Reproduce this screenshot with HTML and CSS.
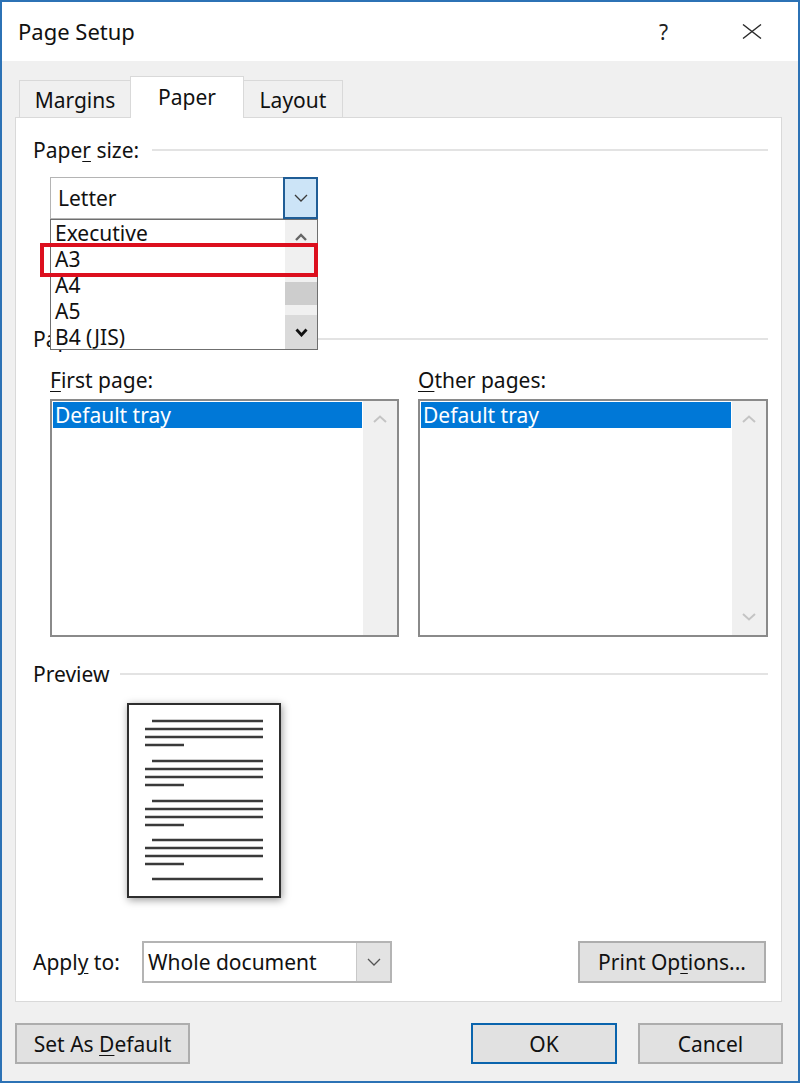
FILE: index.html
```html
<!DOCTYPE html>
<html lang="en">
<head>
  <meta charset="UTF-8" />
  <title>Page Setup</title>
  <link rel="stylesheet" href="styles.css">
</head>
<body>
  <div class="dialog">
    <div class="titlebar">
      <span class="title">Page Setup</span>
      <span class="help">?</span>
      <svg class="close" width="20" height="15" viewBox="0 0 20 15">
        <path d="M1 0.5 L19 14.5 M19 0.5 L1 14.5" stroke="#2b2b2b" stroke-width="1.4" fill="none"/>
      </svg>
    </div>

    <div class="body">
      <div class="tabs">
        <div class="tab tab-margins">Margins</div>
        <div class="tab tab-paper active">Paper</div>
        <div class="tab tab-layout">Layout</div>
      </div>

      <div class="panel">
        <div class="section-head">
          <span>Pape<u>r</u> size:</span>
          <span class="rule"></span>
        </div>
        <div class="size-row">
          <div class="combo combo-letter">
            <span class="combo-text">Letter</span>
            <span class="combo-btn open">
              <svg width="14" height="8" viewBox="0 0 14 8"><polyline points="1,1 7,7 13,1" fill="none" stroke="#3a3a3a" stroke-width="1.3"/></svg>
            </span>
            <!-- open drop-down list, lies over the paper source label -->
            <div class="dropdown">
              <div class="dd-items">
                <div class="dd-item">Executive</div>
                <div class="dd-item">A3</div>
                <div class="dd-item">A4</div>
                <div class="dd-item">A5</div>
                <div class="dd-item">B4 (JIS)</div>
              </div>
              <div class="dd-scroll">
                <div class="dd-up">
                  <svg width="12" height="8" viewBox="0 0 12 8"><polyline points="1,7 6,2 11,7" fill="none" stroke="#666" stroke-width="2.4"/></svg>
                </div>
                <div class="dd-track"></div>
                <div class="dd-thumb"></div>
                <div class="dd-track small"></div>
                <div class="dd-down">
                  <svg width="13" height="9" viewBox="0 0 13 9"><polyline points="1.5,1.5 6.5,7 11.5,1.5" fill="none" stroke="#111" stroke-width="2.8"/></svg>
                </div>
              </div>
              <div class="highlight"></div>
            </div>
          </div>
        </div>

        <div class="section-head source-head">
          <span>Paper source</span>
          <span class="rule"></span>
        </div>
        <div class="trays">
          <div class="tray">
            <div class="tray-label"><u>F</u>irst page:</div>
            <div class="listbox">
              <div class="list-items">
                <div class="list-item selected">Default tray</div>
              </div>
              <div class="list-scroll">
                <div class="ls-btn">
                  <svg width="14" height="8" viewBox="0 0 14 8"><polyline points="1,7 7,1.5 13,7" fill="none" stroke="#c4c4c4" stroke-width="2"/></svg>
                </div>
              </div>
            </div>
          </div>
          <div class="tray">
            <div class="tray-label"><u>O</u>ther pages:</div>
            <div class="listbox">
              <div class="list-items">
                <div class="list-item selected">Default tray</div>
              </div>
              <div class="list-scroll">
                <div class="ls-btn">
                  <svg width="14" height="8" viewBox="0 0 14 8"><polyline points="1,7 7,1.5 13,7" fill="none" stroke="#c4c4c4" stroke-width="2"/></svg>
                </div>
                <div class="ls-btn bottom">
                  <svg width="14" height="8" viewBox="0 0 14 8"><polyline points="1,1 7,6.5 13,1" fill="none" stroke="#c4c4c4" stroke-width="2"/></svg>
                </div>
              </div>
            </div>
          </div>
        </div>

        <div class="section-head preview-head">
          <span>Preview</span>
          <span class="rule"></span>
        </div>
        <div class="preview-page">
          <svg width="150" height="191" viewBox="0 0 150 191">
            <g stroke="#3a3a3a" stroke-width="2.3">
              <line x1="23" y1="16" x2="134" y2="16"/>
              <line x1="16" y1="24" x2="134" y2="24"/>
              <line x1="16" y1="32" x2="134" y2="32"/>
              <line x1="16" y1="40" x2="55" y2="40"/>
              <line x1="23" y1="56" x2="134" y2="56"/>
              <line x1="16" y1="64" x2="134" y2="64"/>
              <line x1="16" y1="72" x2="134" y2="72"/>
              <line x1="16" y1="80" x2="55" y2="80"/>
              <line x1="23" y1="96" x2="134" y2="96"/>
              <line x1="16" y1="104" x2="134" y2="104"/>
              <line x1="16" y1="112" x2="134" y2="112"/>
              <line x1="16" y1="120" x2="55" y2="120"/>
              <line x1="23" y1="135" x2="134" y2="135"/>
              <line x1="16" y1="143" x2="134" y2="143"/>
              <line x1="16" y1="151" x2="134" y2="151"/>
              <line x1="16" y1="159" x2="55" y2="159"/>
              <line x1="23" y1="174" x2="134" y2="174"/>
            </g>
          </svg>
        </div>

        <div class="apply-row">
          <span class="apply-label">Appl<u>y</u> to:</span>
          <div class="combo combo-apply">
            <span class="combo-text">Whole document</span>
            <span class="combo-btn">
              <svg width="14" height="8" viewBox="0 0 14 8"><polyline points="1,1 7,7 13,1" fill="none" stroke="#555" stroke-width="1.3"/></svg>
            </span>
          </div>
          <button class="btn print-btn">Print Op<u>t</u>ions...</button>
        </div>
      </div>

      <div class="footer">
        <button class="btn default-btn">Set As <u>D</u>efault</button>
        <button class="btn ok-btn">OK</button>
        <button class="btn cancel-btn">Cancel</button>
      </div>
    </div>
  </div>
</body>
</html>
```

FILE: styles.css
```css
body {
  margin: 0;
  padding: 0;
  font-family: "Noto Sans", "Open Sans", sans-serif;
  font-size: 21px;
  color: #111;
  background: #f0f0f0;
}
u {
  text-decoration: underline;
  text-underline-offset: 3px;
  text-decoration-thickness: 1px;
}
.dialog {
  width: 800px;
  height: 1083px;
  box-sizing: border-box;
  border: 2px solid #2c72b5;
  background: #f0f0f0;
  overflow: hidden;
}
.titlebar {
  height: 59px;
  background: #fff;
  display: flex;
  align-items: center;
  padding-left: 16px;
  padding-right: 36px;
}
.title {
  font-size: 22px;
  line-height: 26px;
  color: #111;
  margin-top: -2px;
}
.help {
  margin-left: auto;
  margin-right: 74px;
  font-size: 21px;
  line-height: 26px;
  color: #222;
}
.close {
  display: block;
}
.body {
  padding-left: 13px;
}
.tabs {
  height: 56px;
  display: flex;
  align-items: flex-end;
  padding-left: 4px;
  position: relative;
  z-index: 1;
}
.tab {
  height: 37px;
  box-sizing: border-box;
  border: 1px solid #d9d9d9;
  border-bottom: none;
  background: #f0f0f0;
  text-align: center;
  padding-top: 6px;
  line-height: 26px;
}
.tab-margins {
  width: 112px;
}
.tab-paper {
  width: 114px;
  margin-left: -1px;
}
.tab-layout {
  width: 100px;
  margin-left: -1px;
}
.tab.active {
  height: 42px;
  background: #fff;
  margin-bottom: -1px;
  padding-top: 7px;
  position: relative;
  z-index: 2;
}
.panel {
  width: 767px;
  height: 885px;
  box-sizing: border-box;
  border: 1px solid #d9d9d9;
  background: #fff;
  padding: 19px 13px 0 17px;
}
.section-head {
  display: flex;
  align-items: center;
  height: 26px;
  line-height: 26px;
}
.rule {
  flex: 1;
  height: 2px;
  background: #e3e3e3;
  margin-left: 13px;
}
.preview-head .rule {
  margin-left: 11px;
}
.size-row {
  margin-top: 14px;
  padding-left: 17px;
}
.combo {
  display: flex;
  box-sizing: border-box;
  background: #fff;
  position: relative;
}
.combo-text {
  flex: 1;
  line-height: 26px;
  align-self: center;
}
.combo-btn {
  width: 34px;
  display: flex;
  align-items: center;
  justify-content: center;
  box-sizing: border-box;
}
.combo-letter {
  width: 268px;
  height: 42px;
  border: 1px solid #b4b4b4;
}
.combo-letter .combo-text {
  padding-left: 7px;
}
.combo-btn.open {
  width: 35px;
  margin: -1px -1px -1px 0;
  background: #cce4f7;
  border: 2px solid #1f5d96;
}
.dropdown {
  position: absolute;
  left: -1px;
  top: 41px;
  width: 268px;
  height: 131px;
  box-sizing: border-box;
  border: 1px solid #6f6f6f;
  background: #fff;
  display: flex;
  z-index: 5;
}
.dd-items {
  flex: 1;
  overflow: hidden;
  padding-left: 4px;
}
.dd-item {
  height: 26px;
  line-height: 26px;
}
.dd-scroll {
  width: 32px;
  background: #f0f0f0;
  display: flex;
  flex-direction: column;
}
.dd-up {
  height: 33px;
  display: flex;
  align-items: center;
  justify-content: center;
}
.dd-track {
  height: 29px;
}
.dd-track.small {
  height: 10px;
}
.dd-thumb {
  height: 23px;
  background: #cdcdcd;
}
.dd-down {
  flex: 1;
  background: #dadada;
  display: flex;
  align-items: center;
  justify-content: center;
}
.highlight {
  position: absolute;
  left: -11px;
  top: 23px;
  width: 278px;
  height: 34px;
  box-sizing: border-box;
  border: 4px solid #dc0f1e;
}
.source-head {
  margin-top: 107px;
}
.trays {
  margin-top: 15px;
  padding-left: 17px;
  display: grid;
  grid-template-columns: 349px 350px;
  column-gap: 19px;
}
.tray-label {
  line-height: 26px;
}
.listbox {
  margin-top: 6px;
  height: 238px;
  box-sizing: border-box;
  border: 2px solid #8a8a8a;
  display: flex;
  background: #fff;
}
.list-items {
  flex: 1;
  padding: 1px;
}
.list-item {
  height: 26px;
  line-height: 26px;
  padding-left: 2px;
}
.list-item.selected {
  background: #0078d7;
  color: #fff;
}
.list-scroll {
  width: 34px;
  background: #f0f0f0;
  display: flex;
  flex-direction: column;
  justify-content: space-between;
}
.ls-btn {
  height: 36px;
  display: flex;
  align-items: center;
  justify-content: center;
}
.preview-head {
  margin-top: 24px;
}
.preview-page {
  margin-top: 16px;
  margin-left: 94px;
  width: 154px;
  height: 195px;
  box-sizing: border-box;
  border: 2px solid #2e2e2e;
  background: #fff;
  box-shadow: 1px 2px 8px rgba(0, 0, 0, 0.4);
}
.preview-page svg {
  display: block;
}
.apply-row {
  margin-top: 43px;
  height: 42px;
  display: flex;
  align-items: center;
}
.apply-label {
  width: 109px;
  line-height: 26px;
}
.combo-apply {
  width: 250px;
  height: 42px;
  border: 2px solid #b4b4b4;
}
.combo-apply .combo-text {
  padding-left: 4px;
}
.combo-apply .combo-btn {
  background: #e3e3e3;
  border-left: 1px solid #c8c8c8;
}
.btn {
  font-family: "Noto Sans", "Open Sans", sans-serif;
  font-size: 21px;
  line-height: 26px;
  color: #111;
  background: #e1e1e1;
  border: 2px solid #adadad;
  padding: 0;
  box-sizing: border-box;
}
.print-btn {
  margin-left: auto;
  margin-right: 2px;
  width: 188px;
  height: 42px;
}
.footer {
  margin-top: 21px;
  padding-right: 15px;
  display: flex;
}
.footer .btn {
  height: 41px;
}
.default-btn {
  width: 175px;
}
.ok-btn {
  margin-left: auto;
  width: 146px;
  border-color: #0a64ad;
}
.cancel-btn {
  margin-left: 21px;
  width: 145px;
}
```
